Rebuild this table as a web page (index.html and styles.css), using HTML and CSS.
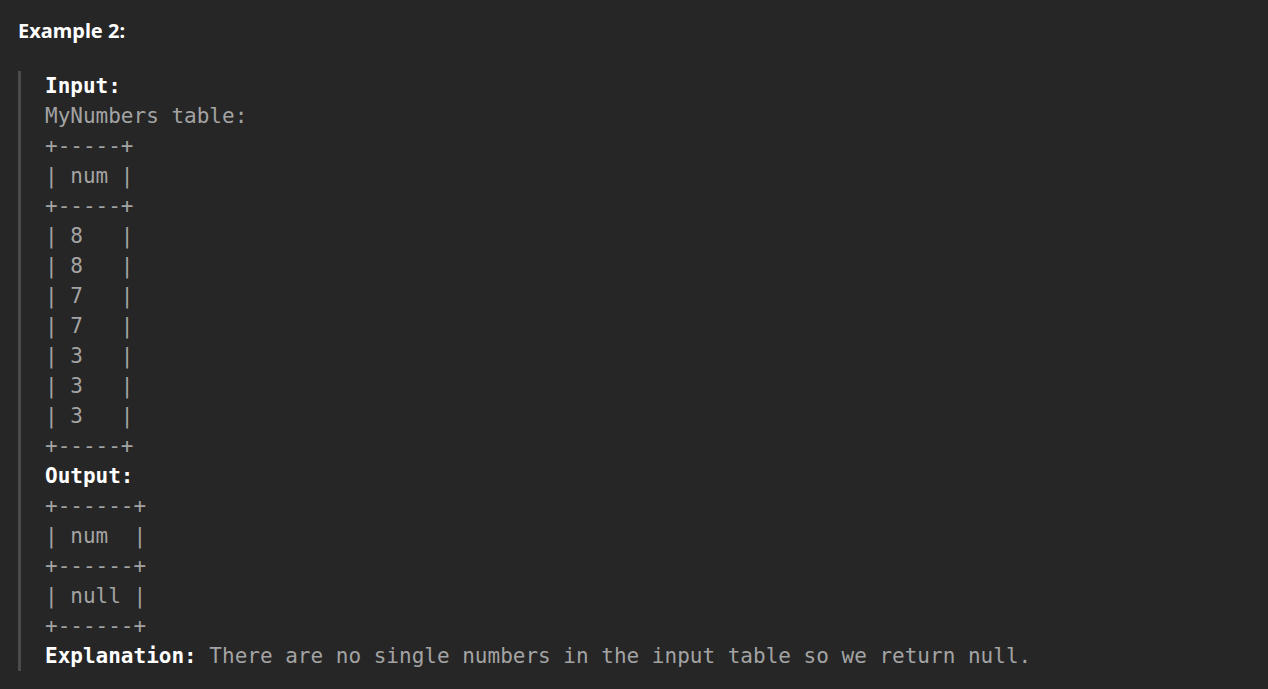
FILE: index.html
```html
<!DOCTYPE html>
<html lang="en">
<head>
  <meta charset="UTF-8" />
  <meta name="viewport" content="width=device-width, initial-scale=1.0"/>
  <title>Example 2</title>
  <link rel="stylesheet" href="styles.css">
</head>
<body>
  <div class="example">
    <h3 class="example-title">Example 2:</h3>
    <pre class="example-block"><strong>Input:</strong>
MyNumbers table:
+-----+
| num |
+-----+
| 8   |
| 8   |
| 7   |
| 7   |
| 3   |
| 3   |
| 3   |
+-----+
<strong>Output:</strong>
+------+
| num  |
+------+
| null |
+------+
<strong>Explanation:</strong> There are no single numbers in the input table so we return null.</pre>
  </div>
</body>
</html>
```

FILE: styles.css
```css
body {
  margin: 0;
  padding: 0;
  background-color: #262626;
  font-family: "Noto Sans", "Liberation Sans", sans-serif;
}
.example {
  padding: 19px 18px;
}
.example-title {
  margin: 0;
  font-size: 20px;
  line-height: 24px;
  font-weight: bold;
  color: #ffffff;
}
.example-block {
  margin: 28px 0 0 0;
  padding: 0 0 0 24px;
  border-left: 3px solid #4b4b4b;
  font-family: "DejaVu Sans Mono", "Liberation Mono", monospace;
  font-size: 21px;
  line-height: 30px;
  color: #a3a3a3;
  white-space: pre;
}
.example-block strong {
  color: #ffffff;
  font-weight: bold;
}
```
